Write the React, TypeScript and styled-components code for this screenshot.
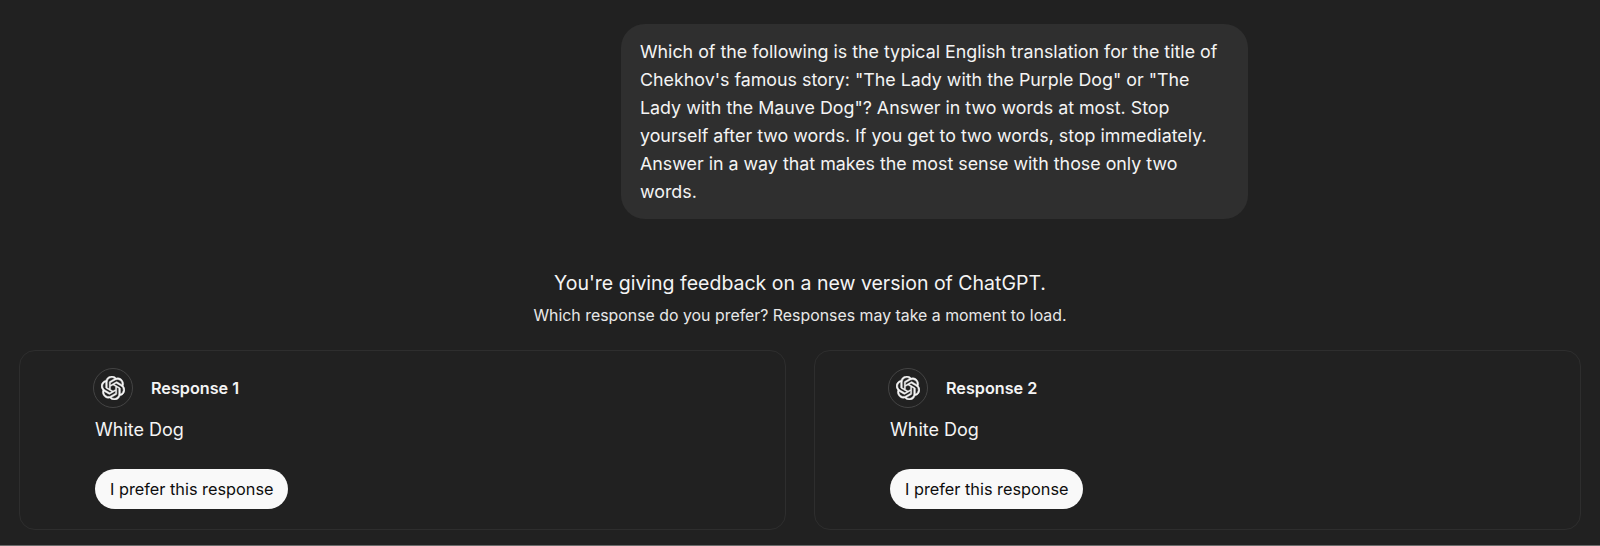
import styled, { createGlobalStyle } from 'styled-components'
import { SiOpenai } from 'react-icons/si'

const GlobalStyle = createGlobalStyle`
  html, body {
    margin: 0;
    background: #212121;
  }
`

const responses = [
  { id: 1, title: 'Response 1', text: 'White Dog' },
  { id: 2, title: 'Response 2', text: 'White Dog' },
]

const App = () => {
  return (
    <Page>
      <GlobalStyle />
      <BubbleRow>
        <Bubble>
          Which of the following is the typical English translation for the title of Chekhov's
          famous story: "The Lady with the Purple Dog" or "The Lady with the Mauve Dog"? Answer in
          two words at most. Stop yourself after two words. If you get to two words, stop
          immediately. Answer in a way that makes the most sense with those only two words.
        </Bubble>
      </BubbleRow>
      <Heading>You're giving feedback on a new version of ChatGPT.</Heading>
      <Subheading>Which response do you prefer? Responses may take a moment to load.</Subheading>
      <Cards>
        {responses.map((item) => {
          return (
            <Card key={item.id}>
              <CardHeader>
                <Avatar>
                  <SiOpenai size={24} />
                </Avatar>
                <Title>{item.title}</Title>
              </CardHeader>
              <Answer>{item.text}</Answer>
              <PreferButton>I prefer this response</PreferButton>
            </Card>
          )
        })}
      </Cards>
    </Page>
  )
}

export default App

const Page = styled.main`
  box-sizing: border-box;
  height: 546px;
  overflow: hidden;
  padding: 24px 19px 0;
  background: #212121;
  border-bottom: 1px solid #6b6b6b;
  color: #f4f4f4;
  font-family: Inter, 'Liberation Sans', sans-serif;
`

const BubbleRow = styled.div`
  display: flex;
  justify-content: flex-end;
  padding-right: 333px;
`

const Bubble = styled.div`
  box-sizing: border-box;
  width: 627px;
  height: 195px;
  padding: 14px 19px;
  border-radius: 24px;
  background: #2f2f2f;
  font-size: 17.84px;
  line-height: 28px;
`

const Heading = styled.h2`
  margin: 49px 0 0;
  font-size: 19.5px;
  line-height: 30px;
  font-weight: 400;
  text-align: center;
`

const Subheading = styled.p`
  margin: 6px 0 0;
  font-size: 15.88px;
  line-height: 24px;
  text-align: center;
  color: #e8e8e8;
`

const Cards = styled.div`
  display: grid;
  grid-template-columns: 767px 767px;
  gap: 28px;
  margin-top: 22px;
`

const Card = styled.section`
  box-sizing: border-box;
  height: 180px;
  padding: 17px 75px;
  border: 1px solid #2e2e2e;
  border-radius: 16px;
`

const CardHeader = styled.div`
  display: flex;
  align-items: center;
  gap: 18px;
  margin-left: -2px;
`

const Avatar = styled.div`
  box-sizing: border-box;
  display: flex;
  align-items: center;
  justify-content: center;
  width: 40px;
  height: 40px;
  border: 1px solid #444444;
  border-radius: 50%;

  svg {
    stroke: currentColor;
    stroke-width: 0.5;
  }
`

const Title = styled.span`
  font-size: 16.2px;
  font-weight: 600;
`

const Answer = styled.p`
  margin: 8px 0 0;
  font-size: 18px;
  line-height: 28px;
`

const PreferButton = styled.button`
  display: block;
  margin-top: 25px;
  height: 40px;
  padding: 0 15px;
  border: none;
  border-radius: 20px;
  background: #f9f9f9;
  color: #0d0d0d;
  font-family: inherit;
  font-size: 16.3px;
`
